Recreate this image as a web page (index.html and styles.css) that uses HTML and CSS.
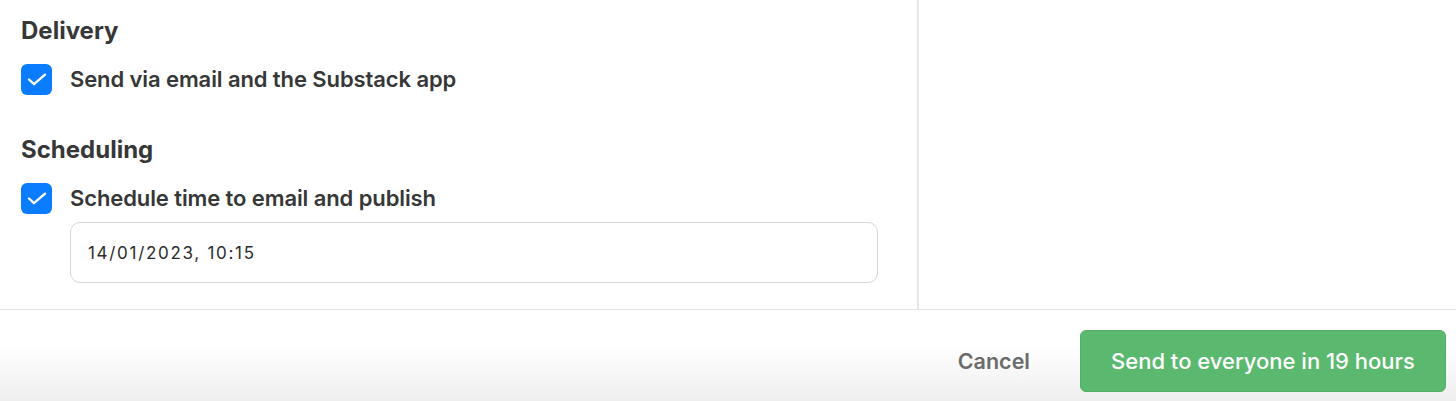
FILE: index.html
```html
<!DOCTYPE html>
<html lang="en">
<head>
    <meta charset="UTF-8">
    <meta name="viewport" content="width=device-width, initial-scale=1.0">
    <title>Publish settings</title>
    <link rel="stylesheet" href="styles.css">
</head>
<body>
    <div class="modal">
        <div class="modal-body">
            <div class="settings">
                <section class="group">
                    <h2>Delivery</h2>
                    <label class="check-row">
                        <span class="checkbox">
                            <svg width="20" height="13" viewBox="0 0 20 13"><path d="M2 6.5 L7 11.2 L18 1.6" fill="none" stroke="#fff" stroke-width="2.3" stroke-linecap="round" stroke-linejoin="round"/></svg>
                        </span>
                        Send via email and the Substack app
                    </label>
                </section>
                <section class="group">
                    <h2>Scheduling</h2>
                    <label class="check-row">
                        <span class="checkbox">
                            <svg width="20" height="13" viewBox="0 0 20 13"><path d="M2 6.5 L7 11.2 L18 1.6" fill="none" stroke="#fff" stroke-width="2.3" stroke-linecap="round" stroke-linejoin="round"/></svg>
                        </span>
                        Schedule time to email and publish
                    </label>
                    <div class="date-input">14/01/2023, 10:15</div>
                </section>
            </div>
            <div class="side"></div>
        </div>
        <div class="modal-footer">
            <button class="btn-cancel">Cancel</button>
            <button class="btn-send">Send to everyone in 19 hours</button>
        </div>
    </div>
</body>
</html>
```

FILE: styles.css
```css
body {
    margin: 0;
    font-family: "Inter", "Liberation Sans", Arial, sans-serif;
    color: #363737;
    background: #fff;
}

.modal {
    width: 1456px;
    height: 401px;
    display: flex;
    flex-direction: column;
    overflow: hidden;
}

.modal-body {
    display: flex;
    height: 309px;
    border-bottom: 1px solid #e6e6e6;
}

.settings {
    width: 919px;
    border-right: 2px solid #e6e6e6;
    padding: 16px 0 0 21px;
    box-sizing: border-box;
}

.side {
    flex: 1;
}

.group h2 {
    margin: 0;
    font-size: 24px;
    font-weight: 700;
    line-height: 30px;
    letter-spacing: 0;
}

.group + .group {
    margin-top: 40px;
}

.check-row {
    display: flex;
    align-items: center;
    gap: 18px;
    margin-top: 18px;
    font-size: 22px;
    font-weight: 600;
    line-height: 31px;
    letter-spacing: -0.1px;
}

.checkbox {
    width: 31px;
    height: 31px;
    border-radius: 6px;
    background: #0a7cff;
    display: flex;
    align-items: center;
    justify-content: center;
}

.date-input {
    margin: 8px 0 0 49px;
    width: 808px;
    height: 61px;
    box-sizing: border-box;
    border: 1px solid #d6d6d6;
    border-radius: 10px;
    padding: 0 17px;
    display: flex;
    align-items: center;
    font-size: 17px;
    letter-spacing: 1.7px;
    color: #2b2b2b;
}

.modal-footer {
    flex: 1;
    display: flex;
    align-items: flex-start;
    justify-content: flex-end;
    gap: 50px;
    padding: 20px 10px 0 0;
    background: linear-gradient(#fff 0%, #fff 40%, #eeeeee 100%);
}

button {
    font-family: inherit;
    border: none;
    cursor: pointer;
}

.btn-cancel {
    background: none;
    font-size: 21.5px;
    font-weight: 600;
    color: #6b6b6b;
    padding: 0;
    height: 62px;
}

.btn-send {
    width: 366px;
    height: 62px;
    border-radius: 6px;
    background: #5bb96f;
    color: #fff;
    font-size: 22px;
    font-weight: 500;
    border: 1px solid #52b065;
}
```
